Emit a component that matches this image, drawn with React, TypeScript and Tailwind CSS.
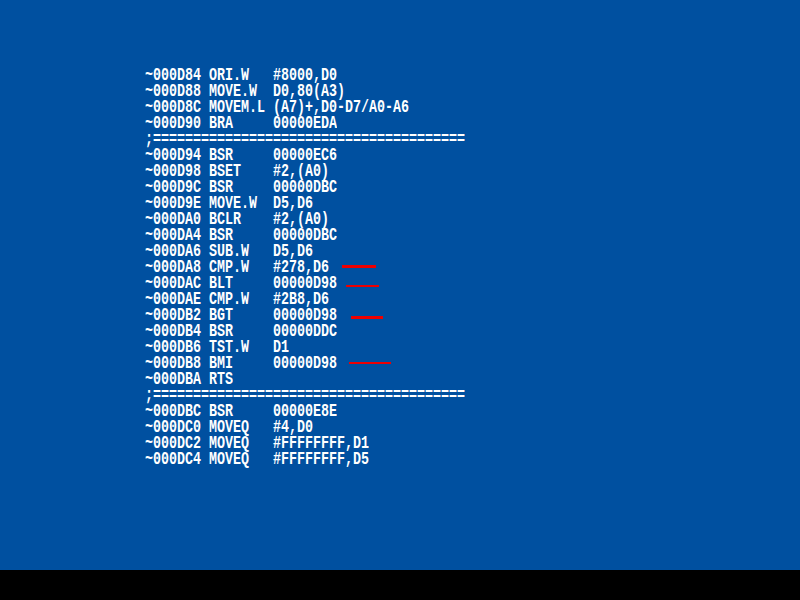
import React from "react";

type Line = { t: string; mark?: string };

const lines: Line[] = [
  { t: "~000D84 ORI.W   #8000,D0" },
  { t: "~000D88 MOVE.W  D0,80(A3)" },
  { t: "~000D8C MOVEM.L (A7)+,D0-D7/A0-A6" },
  { t: "~000D90 BRA     00000EDA" },
  { t: ";=======================================" },
  { t: "~000D94 BSR     00000EC6" },
  { t: "~000D98 BSET    #2,(A0)" },
  { t: "~000D9C BSR     00000DBC" },
  { t: "~000D9E MOVE.W  D5,D6" },
  { t: "~000DA0 BCLR    #2,(A0)" },
  { t: "~000DA4 BSR     00000DBC" },
  { t: "~000DA6 SUB.W   D5,D6" },
  { t: "~000DA8 CMP.W   #278,D6", mark: "ml-[13px] mt-[6px] w-[34px] h-[3px]" },
  { t: "~000DAC BLT     00000D98", mark: "ml-[9px] mt-[10px] w-[33px] h-[2px]" },
  { t: "~000DAE CMP.W   #2B8,D6" },
  { t: "~000DB2 BGT     00000D98", mark: "ml-[14px] mt-[9px] w-[32px] h-[3px]" },
  { t: "~000DB4 BSR     00000DDC" },
  { t: "~000DB6 TST.W   D1" },
  { t: "~000DB8 BMI     00000D98", mark: "ml-[12px] mt-[7px] w-[42px] h-[2px]" },
  { t: "~000DBA RTS" },
  { t: ";=======================================" },
  { t: "~000DBC BSR     00000E8E" },
  { t: "~000DC0 MOVEQ   #4,D0" },
  { t: "~000DC2 MOVEQ   #FFFFFFFF,D1" },
  { t: "~000DC4 MOVEQ   #FFFFFFFF,D5" },
];

export default function App() {
  return (
    <div className="w-[800px] h-[600px] flex flex-col overflow-hidden">
      <div className="h-[570px] bg-[#0050a0] pl-[145px] pt-[67px]">
        <div
          className="flex flex-col text-white font-bold text-[13.333px] whitespace-pre"
          style={{ fontFamily: '"Liberation Mono", "DejaVu Sans Mono", monospace' }}
        >
          {lines.map((l, i) => (
            <div key={i} className="flex items-center h-[16px] leading-[16px]">
              <span className="inline-block self-center origin-center scale-y-[1.4] leading-[11px]">{l.t}</span>
              {l.mark && <span className={"block self-start bg-[#ee0000] " + l.mark} />}
            </div>
          ))}
        </div>
      </div>
      <div className="h-[30px] bg-black" />
    </div>
  );
}
